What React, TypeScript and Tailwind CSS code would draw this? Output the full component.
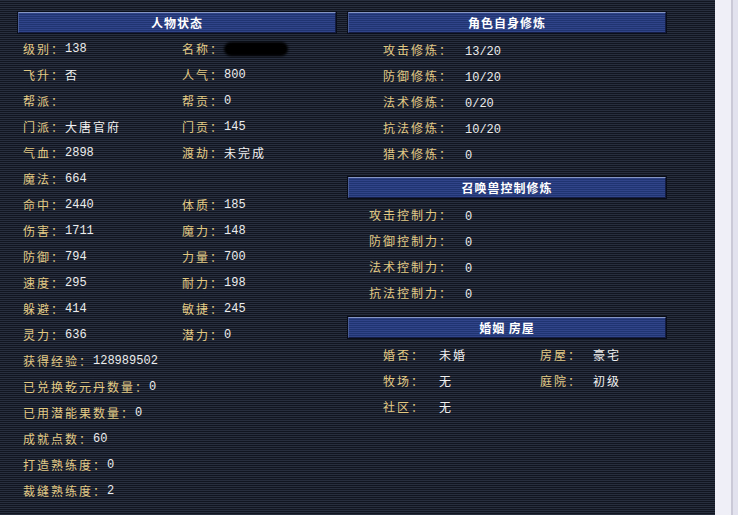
import React from "react";

type Cell = { label: string; value?: string; hidden?: boolean };

const cjk = /[\u4e00-\u9fff]/;

const leftRows: Cell[][] = [
  [{ label: "级别：", value: "138" }, { label: "名称：", hidden: true }],
  [{ label: "飞升：", value: "否" }, { label: "人气：", value: "800" }],
  [{ label: "帮派：", value: "" }, { label: "帮贡：", value: "0" }],
  [{ label: "门派：", value: "大唐官府" }, { label: "门贡：", value: "145" }],
  [{ label: "气血：", value: "2898" }, { label: "渡劫：", value: "未完成" }],
  [{ label: "魔法：", value: "664" }],
  [{ label: "命中：", value: "2440" }, { label: "体质：", value: "185" }],
  [{ label: "伤害：", value: "1711" }, { label: "魔力：", value: "148" }],
  [{ label: "防御：", value: "794" }, { label: "力量：", value: "700" }],
  [{ label: "速度：", value: "295" }, { label: "耐力：", value: "198" }],
  [{ label: "躲避：", value: "414" }, { label: "敏捷：", value: "245" }],
  [{ label: "灵力：", value: "636" }, { label: "潜力：", value: "0" }],
  [{ label: "获得经验：", value: "128989502" }],
  [{ label: "已兑换乾元丹数量：", value: "0" }],
  [{ label: "已用潜能果数量：", value: "0" }],
  [{ label: "成就点数：", value: "60" }],
  [{ label: "打造熟练度：", value: "0" }],
  [{ label: "裁缝熟练度：", value: "2" }],
];

const selfTraining: Cell[] = [
  { label: "攻击修炼：", value: "13/20" },
  { label: "防御修炼：", value: "10/20" },
  { label: "法术修炼：", value: "0/20" },
  { label: "抗法修炼：", value: "10/20" },
  { label: "猎术修炼：", value: "0" },
];

const petTraining: Cell[] = [
  { label: "攻击控制力：", value: "0" },
  { label: "防御控制力：", value: "0" },
  { label: "法术控制力：", value: "0" },
  { label: "抗法控制力：", value: "0" },
];

const homeRows: Cell[][] = [
  [{ label: "婚否：", value: "未婚" }, { label: "房屋：", value: "豪宅" }],
  [{ label: "牧场：", value: "无" }, { label: "庭院：", value: "初级" }],
  [{ label: "社区：", value: "无" }],
];

function Label({ text }: { text: string }) {
  return (
    <span className="text-[12px] tracking-[2px] text-[#e3cb86] font-['Noto_Sans_CJK_SC',sans-serif]">
      {text}
    </span>
  );
}

function Value({ text }: { text: string }) {
  return (
    <span
      className={
        cjk.test(text)
          ? "text-[12px] tracking-[2px] text-[#f2f2f2] font-['Noto_Sans_CJK_SC',sans-serif]"
          : "text-[12px] text-[#ececec] font-['Liberation_Mono','Noto_Sans_CJK_SC',monospace]"
      }
    >
      {text}
    </span>
  );
}

function Header({ title }: { title: string }) {
  return (
    <div className="h-[21px] flex items-center justify-center border-t border-l border-t-[#8596c4] border-l-[#4a5c96] border-r border-b border-r-[#141c44] border-b-[#141c44] shadow-[0_0_0_1px_#0a0e18] bg-[image:repeating-linear-gradient(180deg,#30448a_0px,#30448a_1px,#213472_1px,#213472_2px)]">
      <span className="text-[12px] font-bold text-white tracking-[1px] font-['Noto_Sans_CJK_SC',sans-serif]">
        {title}
      </span>
    </div>
  );
}

export default function App() {
  return (
    <div className="flex h-[515px] w-[738px] overflow-hidden">
      <div className="w-[715px] h-full flex gap-[12px] pl-[18px] pt-[12px] bg-[image:repeating-linear-gradient(180deg,#272e3e_0px,#272e3e_1px,#10151f_1px,#10151f_2px)]">
        {/* 人物状态 */}
        <div className="w-[318px] flex flex-col">
          <Header title="人物状态" />
          <div className="mt-[3px] flex flex-col">
            {leftRows.map((row, i) => (
              <div key={i} className="grid grid-cols-2 h-[26px] items-center">
                {row.map((c) => (
                  <div key={c.label} className={row.length === 1 ? "col-span-2 pl-[5px] flex items-center whitespace-nowrap" : "pl-[5px] flex items-center whitespace-nowrap"}>
                    <Label text={c.label} />
                    {c.hidden ? (
                      <span className="inline-block w-[64px] h-[14px] rounded-[7px] bg-black blur-[1px]" />
                    ) : (
                      <Value text={c.value ?? ""} />
                    )}
                  </div>
                ))}
              </div>
            ))}
          </div>
        </div>

        {/* right column */}
        <div className="w-[318px] flex flex-col">
          <Header title="角色自身修炼" />
          <div className="mt-[3px] flex flex-col">
            {selfTraining.map((c) => (
              <div key={c.label} className="flex h-[26px] items-center">
                <div className="w-[105px] text-right whitespace-nowrap">
                  <Label text={c.label} />
                </div>
                <div className="pl-[12px]">
                  <Value text={c.value ?? ""} />
                </div>
              </div>
            ))}
          </div>

          <div className="mt-[11px]">
            <Header title="召唤兽控制修炼" />
          </div>
          <div className="mt-[3px] flex flex-col">
            {petTraining.map((c) => (
              <div key={c.label} className="flex h-[26px] items-center">
                <div className="w-[105px] text-right whitespace-nowrap">
                  <Label text={c.label} />
                </div>
                <div className="pl-[12px]">
                  <Value text={c.value ?? ""} />
                </div>
              </div>
            ))}
          </div>

          <div className="mt-[12px]">
            <Header title="婚姻 房屋" />
          </div>
          <div className="mt-[3px] flex flex-col">
            {homeRows.map((row, i) => (
              <div key={i} className="grid grid-cols-[35px_56px_101px_53px_1fr] h-[26px] items-center">
                <div />
                {row.map((c) => (
                  <React.Fragment key={c.label}>
                    <div className="whitespace-nowrap">
                      <Label text={c.label} />
                    </div>
                    <div className="whitespace-nowrap">
                      <Value text={c.value ?? ""} />
                    </div>
                  </React.Fragment>
                ))}
              </div>
            ))}
          </div>
        </div>
      </div>

      {/* scrollbar edge */}
      <div className="w-[16px] h-full bg-[#efeff8]" />
      <div className="w-[2px] h-full bg-[#c9c9d8]" />
      <div className="flex-1 h-full bg-[#e2e2ee]" />
    </div>
  );
}
